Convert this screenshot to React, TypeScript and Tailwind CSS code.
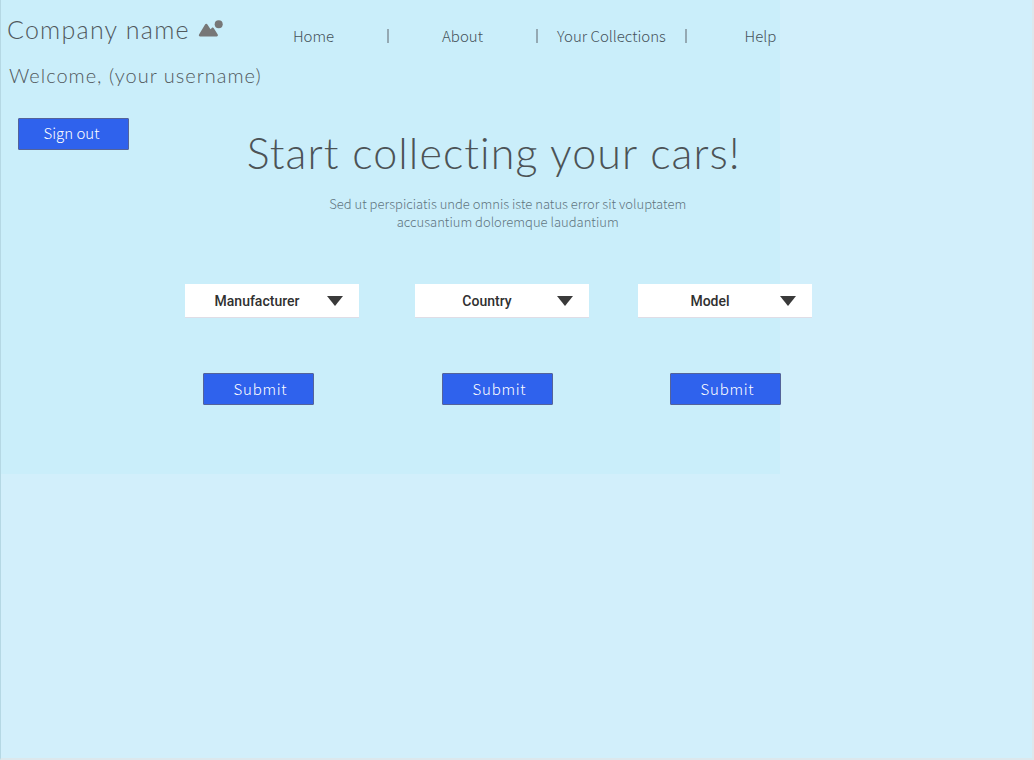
import { Fragment } from "react";

const links = ["Home", "About", "Your Collections", "Help"];

const filters = [
  { label: "Manufacturer", column: "", button: "ml-[18px]" },
  { label: "Country", column: "ml-14", button: "ml-[27px]" },
  { label: "Model", column: "ml-[49px]", button: "ml-8" },
];

const sans = "font-['Noto_Sans_CJK_SC','Noto_Sans',sans-serif]";
const action =
  "flex h-8 w-[111px] items-center justify-center rounded-[1px] border border-[#54639a] bg-[#2f62ed] text-[15px] leading-5 font-light text-white";

function Logo() {
  return (
    <svg viewBox="0 0 26 20" className="h-5 w-[26px]" fill="#777777" aria-hidden="true">
      <path d="M2.200 17.500C.8 17.500.5 16.400 1.200 15.300L6.900 5.700c.7-1.200 2-1.200 2.700 0l2.900 4.500 1.300-1.200c.6-.6 1.500-.5 2 .2l3.800 6.100c.7 1.100.2 2.200-1 2.200z" />
      <circle cx="20.700" cy="5.300" r="4" />
    </svg>
  );
}

export default function App() {
  return (
    <div className={`min-h-screen border-r-2 border-b-2 border-l border-r-[#dce8ed] border-b-[#dce8ed] border-l-[#b5d8e4] bg-[#d2effb] ${sans}`}>
      <main className="w-[75.6%] bg-[#caeefa] pb-[69px]">
        <header>
          <div className="flex items-start pt-[11px]">
            <a href="#" className="flex w-[239px] shrink-0 items-center gap-2 pl-1.5 font-['Lato',sans-serif] text-[25px] leading-9 font-light tracking-wider whitespace-nowrap text-[#51595d]">
              Company name
              <Logo />
            </a>
            <nav className="flex w-[594px] shrink-0 items-center pt-[13px] text-[15px] leading-6 font-light text-[#46535a]">
              {links.map((link, i) => (
                <Fragment key={link}>
                  {i > 0 && <span className="h-3.5 w-0.5 bg-[#94a9b3]" />}
                  <a href="#" className="flex-1 text-center whitespace-nowrap">
                    {link}
                  </a>
                </Fragment>
              ))}
            </nav>
          </div>
          <p className="mt-[11px] pl-2 font-['Lato',sans-serif] text-xl leading-8 font-light tracking-wider text-[#51595d]">
            Welcome, (your username)
          </p>
        </header>
        <button type="button" className={`mt-[27px] ml-[17px] pr-1 pb-0.5 ${action}`}>
          Sign out
        </button>

        <section className="-mt-[22px] ml-[206px] text-center">
          <h1 className="font-['Lato',sans-serif] text-[43px] leading-[50px] font-light tracking-wide whitespace-nowrap text-[#4c5356]">
            Start collecting your cars!
          </h1>
          <p className="mx-auto mt-[17px] w-[396px] pl-7 text-[13px] leading-[18px] font-light text-[#5f757f]">
            Sed ut perspiciatis unde omnis iste natus error sit voluptatem accusantium doloremque laudantium
          </p>
        </section>

        <div className="mt-[53px] ml-[184px] flex">
          {filters.map(({ label, column, button }) => (
            <form key={label} className={`w-[174px] shrink-0 ${column}`} onSubmit={(e) => e.preventDefault()}>
              <div className="relative">
                <select
                  aria-label={label}
                  className="h-[34px] w-full appearance-none border-b border-[#dfdde6] bg-white pr-[30px] text-center font-['Roboto',sans-serif] text-sm font-medium text-[#303030]"
                >
                  <option>{label}</option>
                </select>
                <svg viewBox="0 0 16 10" className="pointer-events-none absolute top-3 right-4 h-2.5 w-4" fill="#3a3a3a" aria-hidden="true">
                  <path d="M0 0h16L8 10z" />
                </svg>
              </div>
              <button type="submit" className={`mt-[55px] pl-1 tracking-wider ${button} ${action}`}>
                Submit
              </button>
            </form>
          ))}
        </div>
      </main>
    </div>
  );
}
